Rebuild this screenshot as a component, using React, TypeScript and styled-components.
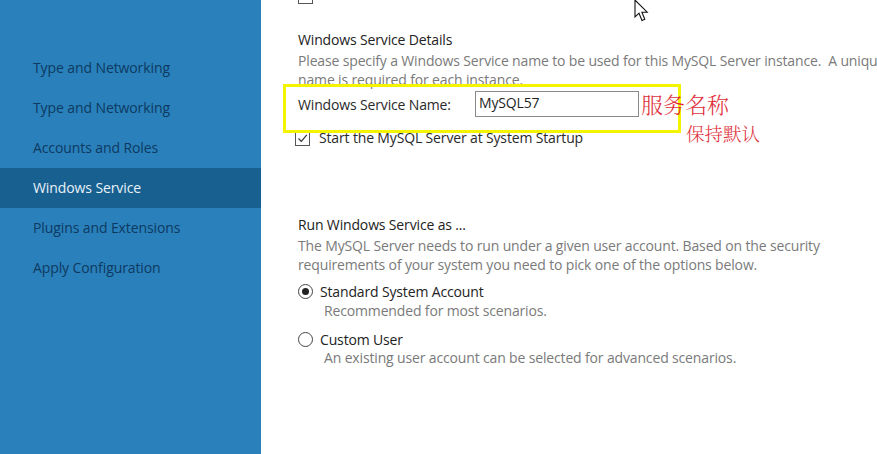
import styled, { createGlobalStyle } from 'styled-components';

const GlobalStyle = createGlobalStyle`
  html, body {
    margin: 0;
    padding: 0;
    background: #ffffff;
  }
  body {
    font-family: 'Open Sans', 'Noto Sans', sans-serif;
  }
`;

const sidebarItems = [
  'Type and Networking',
  'Type and Networking',
  'Accounts and Roles',
  'Windows Service',
  'Plugins and Extensions',
  'Apply Configuration',
];

const Page = styled.div`
  position: relative;
  display: flex;
  width: 877px;
  height: 454px;
  overflow: hidden;
  background: #ffffff;
`;

const Sidebar = styled.nav`
  flex: 0 0 261px;
  background: #2a80ba;
  padding-top: 48px;
  display: flex;
  flex-direction: column;
`;

const NavItem = styled.div<{ $active?: boolean }>`
  height: 40px;
  line-height: 40px;
  padding-left: 33px;
  font-size: 14px;
  letter-spacing: -0.1px;
  color: ${(p) => (p.$active ? '#e8f1f8' : '#0d3a62')};
  background: ${(p) => (p.$active ? '#17608f' : 'transparent')};
`;

const Main = styled.main`
  flex: 1;
  padding-left: 37px;
  display: flex;
  flex-direction: column;
  color: #1f1f1f;
  font-size: 14px;
  letter-spacing: -0.15px;
`;

const CutRow = styled.div`
  margin-top: -11px;
  height: 14px;
`;

const Heading = styled.div<{ $top: number }>`
  margin-top: ${(p) => p.$top}px;
  margin-bottom: 2px;
  line-height: 19px;
  color: #222;
`;

const Desc = styled.div`
  line-height: 19px;
  color: #7a7a7a;
  white-space: nowrap;
`;

const NameRow = styled.div`
  margin-top: 2px;
  display: flex;
  align-items: center;
  height: 26px;
`;

const Label = styled.span`
  width: 177px;
  color: #2a2a2a;
`;

const TextBox = styled.div`
  width: 159px;
  height: 24px;
  border: 1px solid #8a8a8a;
  padding-left: 3px;
  line-height: 22px;
  color: #1f1f1f;
`;

const CheckRow = styled.div<{ $top: number }>`
  margin-top: ${(p) => p.$top}px;
  margin-left: -3px;
  display: flex;
  align-items: center;
  gap: 9px;
  line-height: 18px;
  color: #2a2a2a;
`;

const Box = styled.span`
  width: 13px;
  height: 13px;
  border: 1px solid #555;
  display: inline-flex;
  align-items: center;
  justify-content: center;
  background: #fff;
`;

const RadioRow = styled.div<{ $top: number }>`
  margin-top: ${(p) => p.$top}px;
  display: flex;
  align-items: center;
  gap: 7px;
  line-height: 19px;
  color: #222;
`;

const Radio = styled.span<{ $checked?: boolean }>`
  width: 13px;
  height: 13px;
  border: 1px solid #444;
  border-radius: 50%;
  display: inline-flex;
  align-items: center;
  justify-content: center;
  &::after {
    content: '';
    width: 7px;
    height: 7px;
    border-radius: 50%;
    background: ${(p) => (p.$checked ? '#222' : 'transparent')};
  }
`;

const SubText = styled.div<{ $top?: number }>`
  margin-top: ${(p) => p.$top ?? 0}px;
  padding-left: 26px;
  line-height: 18px;
  color: #7a7a7a;
`;

const Highlight = styled.div`
  position: absolute;
  left: 283px;
  top: 84px;
  width: 392px;
  height: 43px;
  border: 3px solid #f4f400;
  pointer-events: none;
`;

const Note = styled.div<{ $x: number; $y: number; $size: number }>`
  position: absolute;
  left: ${(p) => p.$x}px;
  top: ${(p) => p.$y}px;
  font-family: 'Noto Serif CJK SC', 'Noto Sans CJK SC', serif;
  font-size: ${(p) => p.$size}px;
  line-height: 1;
  color: #e0303a;
  font-weight: 300;
  white-space: nowrap;
`;

const Cursor = styled.svg`
  position: absolute;
  left: 634px;
  top: -1px;
`;

function Tick() {
  return (
    <svg width="11" height="11" viewBox="0 0 11 11">
      <path d="M1.5 5.5 L4.3 8.3 L9.8 1.8" fill="none" stroke="#333" strokeWidth="1.2" />
    </svg>
  );
}

export default function App() {
  return (
    <>
      <GlobalStyle />
      <Page>
        <Sidebar>
          {sidebarItems.map((item, i) => (
            <NavItem key={i} $active={item === 'Windows Service'}>
              {item}
            </NavItem>
          ))}
        </Sidebar>
        <Main>
          <CutRow>
            <Box />
          </CutRow>
          <Heading $top={27}>Windows Service Details</Heading>
          <Desc>
            Please specify a Windows Service name to be used for this MySQL Server instance.&nbsp; A unique
          </Desc>
          <Desc>name is required for each instance.</Desc>
          <NameRow>
            <Label>Windows Service Name:</Label>
            <TextBox>MySQL57</TextBox>
          </NameRow>
          <CheckRow $top={12}>
            <Box>
              <Tick />
            </Box>
            Start the MySQL Server at System Startup
          </CheckRow>
          <Heading $top={68}>Run Windows Service as ...</Heading>
          <Desc>The MySQL Server needs to run under a given user account. Based on the security</Desc>
          <Desc>requirements of your system you need to pick one of the options below.</Desc>
          <RadioRow $top={8}>
            <Radio $checked />
            Standard System Account
          </RadioRow>
          <SubText $top={1}>Recommended for most scenarios.</SubText>
          <RadioRow $top={10}>
            <Radio />
            Custom User
          </RadioRow>
          <SubText>An existing user account can be selected for advanced scenarios.</SubText>
        </Main>
        <Highlight />
        <Note $x={641} $y={93} $size={22}>服务名称</Note>
        <Note $x={686} $y={124} $size={18.5}>保持默认</Note>
        <Cursor width="17" height="25" viewBox="0 0 17 25">
          <path
            d="M1 1 L1 18 L5 14.2 L8 21.5 L10.8 20.3 L7.9 13.2 L13.2 13.2 Z"
            fill="#fff"
            stroke="#111"
            strokeWidth="1.1"
            strokeLinejoin="miter"
          />
        </Cursor>
      </Page>
    </>
  );
}
